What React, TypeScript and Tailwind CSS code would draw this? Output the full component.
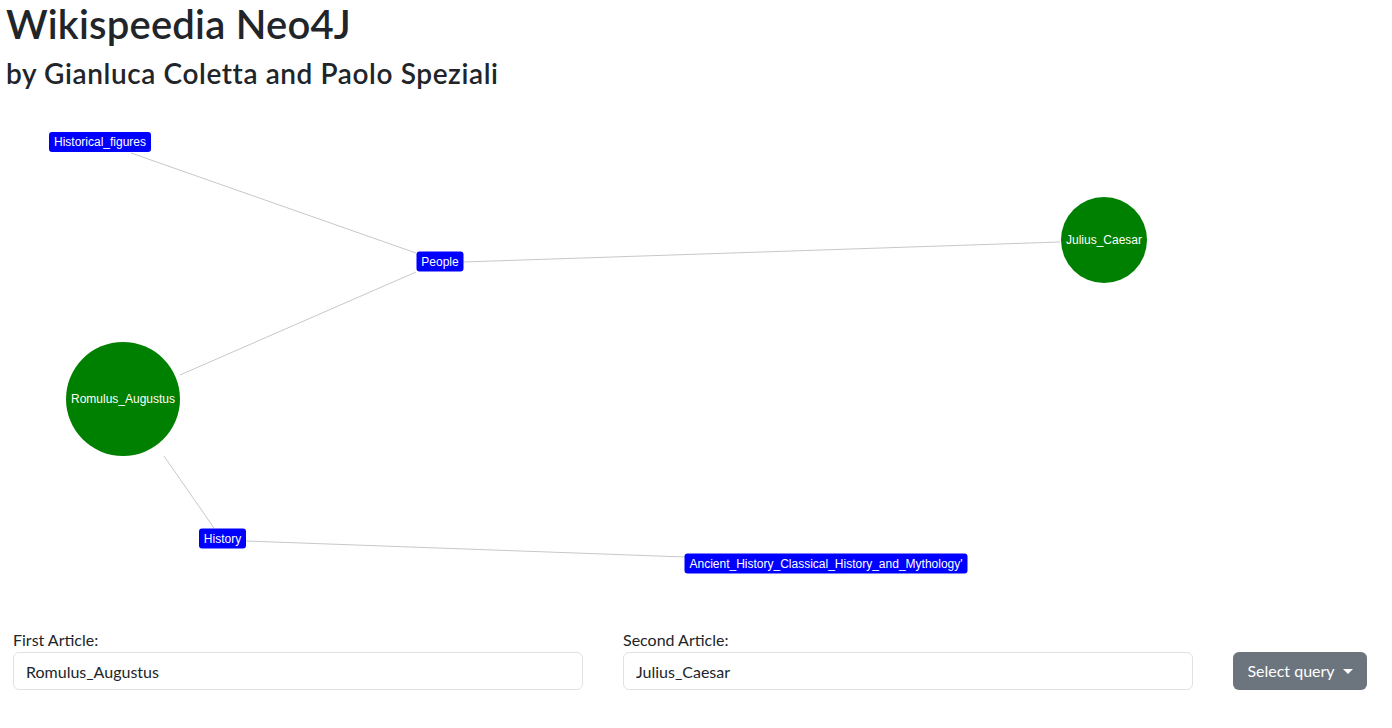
import React from 'react'

type Node = { id: string; x: number; y: number; kind: 'cat' | 'article'; w?: number; r?: number }

// graph coordinates are page coordinates; the svg is shifted up by TOP
const TOP = 98

const nodes: Node[] = [
    { id: 'Historical_figures', x: 100, y: 142, kind: 'cat', w: 102 },
    { id: 'People', x: 440, y: 261.5, kind: 'cat', w: 47 },
    { id: 'History', x: 222.5, y: 538.5, kind: 'cat', w: 47 },
    { id: "Ancient_History_Classical_History_and_Mythology'", x: 826, y: 563.5, kind: 'cat', w: 283 },
    { id: 'Julius_Caesar', x: 1104, y: 240, kind: 'article', r: 43 },
    { id: 'Romulus_Augustus', x: 123, y: 399, kind: 'article', r: 57 },
]

const edges = [
    [131, 153, 416, 253],
    [463, 262, 1060, 242],
    [416, 272, 180, 375],
    [164, 456, 214, 528],
    [246, 541, 685, 557],
]

function Graph() {
    return (
        <svg className="block w-full h-[530px]" viewBox={`0 ${TOP} 1392 530`}>
            {edges.map(([x1, y1, x2, y2], i) => (
                <line key={i} x1={x1} y1={y1} x2={x2} y2={y2} stroke="#c8c8c8" strokeWidth={1} />
            ))}
            {nodes.map((n) =>
                n.kind === 'article' ? (
                    <g key={n.id}>
                        <circle cx={n.x} cy={n.y} r={n.r} fill="#008000" />
                        <text x={n.x} y={n.y + 4} textAnchor="middle" fill="#ffffff" fontSize={12} fontFamily="'Liberation Sans', Arial, sans-serif">
                            {n.id}
                        </text>
                    </g>
                ) : (
                    <g key={n.id}>
                        <rect x={n.x - (n.w as number) / 2} y={n.y - 10} width={n.w} height={20} rx={3} fill="#0000ff" />
                        <text x={n.x} y={n.y + 4} textAnchor="middle" fill="#ffffff" fontSize={12} fontFamily="'Liberation Sans', Arial, sans-serif">
                            {n.id}
                        </text>
                    </g>
                )
            )}
        </svg>
    )
}

export default function App() {
    return (
        <div className="min-h-[728px] bg-white text-[#212529] font-['Lato','Noto_Sans',sans-serif]">
            {/* Header */}
            <div className="px-[6px]">
                <h1 className="text-[40px] leading-[48px] font-semibold mb-2 tracking-[0.2px]">Wikispeedia Neo4J</h1>
                <h3 className="text-[28px] leading-[34px] font-semibold mb-2 tracking-[0.6px]">by Gianluca Coletta and Paolo Speziali</h3>
            </div>

            {/* Graph */}
            <Graph />

            {/* Query form */}
            <div className="flex items-end gap-10 pl-[13px]">
                <div className="w-[570px]">
                    <label className="block text-base leading-6">First Article:</label>
                    <input
                        className="w-full h-[38px] px-3 text-base border border-[#dee2e6] rounded-md outline-none"
                        defaultValue="Romulus_Augustus"
                    />
                </div>
                <div className="w-[570px]">
                    <label className="block text-base leading-6">Second Article:</label>
                    <input
                        className="w-full h-[38px] px-3 text-base border border-[#dee2e6] rounded-md outline-none"
                        defaultValue="Julius_Caesar"
                    />
                </div>
                <button className="h-[38px] w-[134px] flex items-center justify-center gap-2 bg-[#6c757d] text-white text-base rounded-md">
                    Select query
                    <span className="inline-block w-0 h-0 border-t-[5px] border-t-white border-x-[5px] border-x-transparent" />
                </button>
            </div>
        </div>
    )
}
